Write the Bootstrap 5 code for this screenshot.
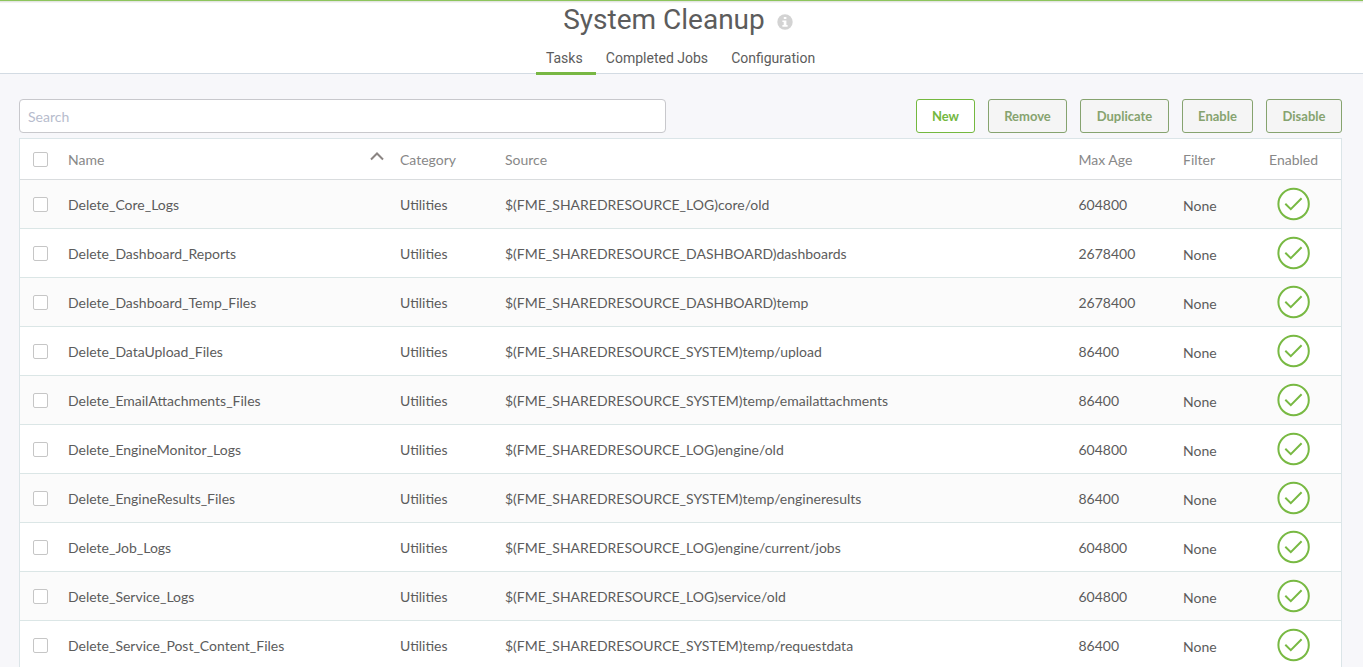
<!DOCTYPE html>
<html lang="en">
<head>
<meta charset="utf-8">
<meta name="viewport" content="width=device-width, initial-scale=1">
<title>System Cleanup</title>
<link href="https://cdn.jsdelivr.net/npm/bootstrap@5.3.0/dist/css/bootstrap.min.css" rel="stylesheet">
<style>
body{height:100vh;overflow:hidden;background:#f7f7fa;color:#5c5c5c;font:14px/20px Lato,sans-serif}
.page-head{height:74px;padding-top:1px;border-top:1px solid #8dc55c;border-bottom:1px solid #d3dbe3;box-shadow:inset 0 1px 0 #e4e6e2,inset 0 2px 0 #f3f3f3;font-family:Roboto,sans-serif}
.page-head h1{font-size:28px;line-height:36px;font-weight:400;color:#5c5c5c;margin-left:-2px}
.tabs .nav-link{color:#5c5c5c;font-size:14px;line-height:20px;padding:10px 0 4px;height:37px;border-radius:0}
.tabs .nav-link.active{border-bottom:3px solid #78b743;padding:10px 13.5px 4px 10px}
.tabs .tab-jobs{margin-left:9.7px}
.tabs .tab-config{margin:0 12px 0 23.1px}
.tools{padding:25px 21px 5px 19px}
.search-box{width:647px;height:34px;font-size:14px;border:1px solid #c8c8cc;border-radius:4px;padding:0 8px}
.search-box::placeholder{color:#b7bccd;opacity:1}
.tool-btn{height:34px;font-size:13px;line-height:20px;font-weight:700;padding:6px 0;border:1px solid #86a36f;border-radius:3px;color:#86a36f;background:#f5f5f5}
.tool-btn.primary{color:#74b83f;border-color:#74b83f;background:#fff}
.task-wrap{margin:0 21px 0 19px;border:1px solid #dbe5e8;background:#fff}
.task-table{table-layout:fixed;width:1321px;border-collapse:separate;border-spacing:0}
.task-table th{height:41px;padding:2px 8px 0;font-weight:400;color:#888;border-bottom:1px solid #d9dcde;vertical-align:middle}
.task-table td{height:49px;padding:2px 8px 0;border-bottom:1px solid #dbe6e6;vertical-align:middle;white-space:nowrap}
.task-table td.filter-cell{padding-top:4px}
.task-table td.state{padding:0 0 0 16px}
.task-table th.pick,.task-table td.pick{padding:0 0 0 13px}
.task-table tbody tr:nth-child(odd){background:#fbfbfb}
.task-table .form-check-input{width:15px;height:15px;margin:0;border:1px solid #c6c6c6;border-radius:2px;background-color:#fff}
svg{display:block}
</style>
<script src="https://cdn.jsdelivr.net/npm/bootstrap@5.3.0/dist/js/bootstrap.bundle.min.js"></script>
</head>
<body>
<header class="page-head bg-white d-flex flex-column align-items-center">
  <div class="d-flex align-items-center">
    <h1 class="mb-0">System Cleanup</h1>
    <svg class="ms-2 mt-1" width="25" height="16" viewBox="-4 0 25 16"><circle cx="8" cy="8" r="7.7" fill="#d3d3d3"/><path d="M6.8 3h2.6v2H6.8zM5.4 6.4h4V11h1.2v1.8H5.4V11h1.3V8.1H5.4z" fill="#fff"/></svg>
  </div>
  <nav class="nav tabs">
    <a class="nav-link active" href="#">Tasks</a>
    <a class="nav-link tab-jobs" href="#">Completed Jobs</a>
    <a class="nav-link tab-config" href="#">Configuration</a>
  </nav>
</header>
<main>
  <div class="tools d-flex justify-content-between">
    <input class="form-control search-box" type="text" placeholder="Search">
    <div class="d-flex" style="gap:13px">
      <button class="btn tool-btn primary" style="width:59px">New</button>
      <button class="btn tool-btn" style="width:79px">Remove</button>
      <button class="btn tool-btn" style="width:89px">Duplicate</button>
      <button class="btn tool-btn" style="width:71px">Enable</button>
      <button class="btn tool-btn" style="width:76px">Disable</button>
    </div>
  </div>
  <div class="task-wrap">
    <table class="task-table">
      <colgroup><col style="width:40px"><col style="width:332px"><col style="width:105px"><col style="width:573.5px"><col style="width:104.5px"><col style="width:86px"><col style="width:80px"></colgroup>
      <thead><tr>
        <th class="pick"><input class="form-check-input d-block" type="checkbox"></th>
        <th><div class="d-flex justify-content-between"><span>Name</span>
          <svg width="14" height="20" viewBox="0 0 14 20"><path d="M1 9.5 7 3.5l6 6" fill="none" stroke="#8b8583" stroke-width="2"/></svg></div></th>
        <th>Category</th><th>Source</th><th>Max Age</th><th>Filter</th><th>Enabled</th>
      </tr></thead>
      <tbody id="tasks"></tbody>
    </table>
  </div>
</main>
<script>
const tasks = [
  ['Delete_Core_Logs','LOG','core/old',604800],
  ['Delete_Dashboard_Reports','DASHBOARD','dashboards',2678400],
  ['Delete_Dashboard_Temp_Files','DASHBOARD','temp',2678400],
  ['Delete_DataUpload_Files','SYSTEM','temp/upload',86400],
  ['Delete_EmailAttachments_Files','SYSTEM','temp/emailattachments',86400],
  ['Delete_EngineMonitor_Logs','LOG','engine/old',604800],
  ['Delete_EngineResults_Files','SYSTEM','temp/engineresults',86400],
  ['Delete_Job_Logs','LOG','engine/current/jobs',604800],
  ['Delete_Service_Logs','LOG','service/old',604800],
  ['Delete_Service_Post_Content_Files','SYSTEM','temp/requestdata',86400]
];
document.getElementById('tasks').innerHTML = tasks.map(([name, res, path, age]) => `<tr>
  <td class="pick"><input class="form-check-input d-block" type="checkbox"></td>
  <td>${name}</td><td>Utilities</td><td>$(FME_SHAREDRESOURCE_${res})${path}</td><td>${age}</td>
  <td class="filter-cell">None</td>
  <td class="state"><svg width="34" height="34" viewBox="0.4 0 34 34" fill="none" stroke="#78b943" stroke-width="2"><circle cx="17" cy="17" r="15.2" fill="#fff"/><path d="m8.7 16.8 5.5 5.4L25 11.3"/></svg></td>
</tr>`).join('');
</script>
</body>
</html>
